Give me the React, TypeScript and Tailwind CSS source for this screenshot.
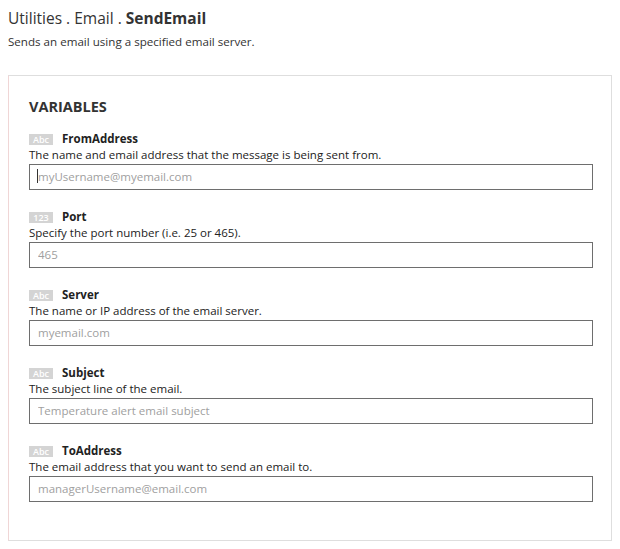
import React from 'react';

interface Variable {
  name: string;
  kind: 'Abc' | '123';
  description: string;
  placeholder: string;
  focused?: boolean;
}

const variables: Variable[] = [
  {
    name: 'FromAddress',
    kind: 'Abc',
    description: 'The name and email address that the message is being sent from.',
    placeholder: 'myUsername@myemail.com',
    focused: true,
  },
  {
    name: 'Port',
    kind: '123',
    description: 'Specify the port number (i.e. 25 or 465).',
    placeholder: '465',
  },
  {
    name: 'Server',
    kind: 'Abc',
    description: 'The name or IP address of the email server.',
    placeholder: 'myemail.com',
  },
  {
    name: 'Subject',
    kind: 'Abc',
    description: 'The subject line of the email.',
    placeholder: 'Temperature alert email subject',
  },
  {
    name: 'ToAddress',
    kind: 'Abc',
    description: 'The email address that you want to send an email to.',
    placeholder: 'managerUsername@email.com',
  },
];

function VariableField({ variable }: { variable: Variable }) {
  return (
    <div className="flex flex-col">
      <div className="flex items-center h-[14px]">
        <span className="bg-[#d4d4d4] text-white text-[9px] leading-[11px] w-[24px] text-center font-semibold">
          {variable.kind}
        </span>
        <span className="ml-[9px] text-[11.5px] font-bold text-[#222]">{variable.name}</span>
      </div>
      <p className="text-[11.5px] leading-[16px] text-[#222] mt-[1px]">{variable.description}</p>
      <div className="relative">
        <input
          type="text"
          placeholder={variable.placeholder}
          className="w-full h-[26px] border border-[#6e6e6e] px-[8px] text-[11.5px] text-[#333] placeholder:text-[#a0a0a0] outline-none bg-white"
        />
        {variable.focused && (
          <span className="absolute left-[8px] top-[6px] w-px h-[14px] bg-[#333]" />
        )}
      </div>
    </div>
  );
}

export default function App() {
  return (
    <div
      className="min-h-screen bg-white px-[8px] pt-[6px] text-[#333]"
      style={{ fontFamily: '"Open Sans", "Noto Sans", sans-serif' }}
    >
      <h1 className="text-[15.5px] leading-[24px] text-[#333] font-normal">
        Utilities . Email . <span className="font-bold">SendEmail</span>
      </h1>
      <p className="text-[11.6px] leading-[16px] text-[#333] mt-[4px]">
        Sends an email using a specified email server.
      </p>
      <div className="mt-[25px] w-[604px] h-[466px] border border-[#dedede] border-l-[#f0d6d6] pl-[20px] pr-[18px] pt-[21px]">
        <h2 className="text-[14.5px] leading-[20px] font-bold text-[#333]">VARIABLES</h2>
        <div className="mt-[15px] flex flex-col gap-[20.5px]">
          {variables.map((v) => (
            <VariableField key={v.name} variable={v} />
          ))}
        </div>
      </div>
    </div>
  );
}
